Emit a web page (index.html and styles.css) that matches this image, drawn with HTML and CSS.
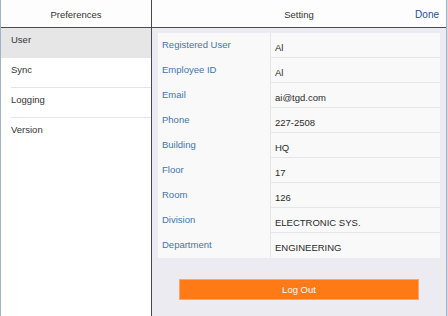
FILE: index.html
```html
<!DOCTYPE html>
<html lang="en">
<head>
    <meta charset="UTF-8">
    <meta name="viewport" content="width=device-width, initial-scale=1.0">
    <title>Preferences</title>
    <link rel="stylesheet" href="styles.css">
</head>
<body>
    <div class="app">
        <aside class="sidebar">
            <header class="bar">
                <span class="bar-title">Preferences</span>
            </header>
            <ul class="nav">
                <li class="nav-item selected"><span class="nav-label">User</span></li>
                <li class="nav-item"><span class="nav-label">Sync</span></li>
                <li class="nav-item"><span class="nav-label">Logging</span></li>
                <li class="nav-item last"><span class="nav-label">Version</span></li>
            </ul>
        </aside>

        <main class="detail">
            <header class="bar bar-split">
                <span></span>
                <span class="bar-title">Setting</span>
                <a class="done">Done</a>
            </header>
            <div class="content">
                <div class="card">
                    <div class="row"><div class="key">Registered User</div><div class="val">Al</div></div>
                    <div class="row"><div class="key">Employee ID</div><div class="val">Al</div></div>
                    <div class="row"><div class="key">Email</div><div class="val">ai@tgd.com</div></div>
                    <div class="row"><div class="key">Phone</div><div class="val">227-2508</div></div>
                    <div class="row"><div class="key">Building</div><div class="val">HQ</div></div>
                    <div class="row"><div class="key">Floor</div><div class="val">17</div></div>
                    <div class="row"><div class="key">Room</div><div class="val">126</div></div>
                    <div class="row"><div class="key">Division</div><div class="val">ELECTRONIC SYS.</div></div>
                    <div class="row"><div class="key">Department</div><div class="val">ENGINEERING</div></div>
                </div>
                <button class="logout">Log Out</button>
            </div>
        </main>
    </div>
</body>
</html>
```

FILE: styles.css
```css
body {
    margin: 0;
    background: #d3dce6;
    font-family: "Liberation Sans", Arial, sans-serif;
    font-size: 9.5px;
    color: #333;
}
.app {
    display: flex;
    width: 445px;
    height: 316px;
    border-left: 1px solid #9fb4c9;
    border-right: 1px solid #9fb4c9;
    background: #fff;
}
.sidebar {
    width: 150px;
    border-right: 1px solid #4a4a4a;
    background: #fff;
}
.bar {
    height: 28px;
    box-sizing: border-box;
    padding-top: 3px;
    line-height: 24px;
    text-align: center;
    border-bottom: 1px solid #4a4a4a;
    background: #fdfdfd;
    color: #333;
}
.bar-split {
    display: grid;
    grid-template-columns: 1fr auto 1fr;
}
.done {
    justify-self: end;
    padding-right: 7px;
    color: #1f4f8e;
    font-size: 10px;
}
.nav {
    list-style: none;
    margin: 0;
    padding: 0;
}
.nav-item {
    padding-left: 10px;
}
.nav-label {
    display: block;
    line-height: 24px;
    padding-bottom: 5px;
    border-bottom: 1px solid #e4e4e4;
}
.nav-item.selected {
    background: #e6e6e6;
}
.nav-item.selected .nav-label,
.nav-item.last .nav-label {
    border-bottom-color: transparent;
}
.detail {
    flex: 1;
    display: flex;
    flex-direction: column;
}
.content {
    flex: 1;
    background: #ecebf1;
    padding: 5px 6px 0;
    display: flex;
    flex-direction: column;
    align-items: center;
}
.card {
    align-self: stretch;
    background: #f9f9f9;
}
.row {
    display: grid;
    grid-template-columns: 112px 1fr;
    height: 25px;
    line-height: 12px;
}
.key {
    padding: 6px 0 0 4px;
    color: #3f76ae;
}
.val {
    padding: 9px 0 0 4px;
    border-left: 1px solid #e6e5ea;
    border-bottom: 1px solid #e6e5ea;
    color: #2a2a2a;
}
.row:last-child .val {
    border-bottom-color: #f9f9f9;
}
.logout {
    margin-top: 21px;
    width: 240px;
    height: 21px;
    background: #fd7a16;
    border: 1px solid #f7a76e;
    color: #fff;
    font-family: inherit;
    font-size: 9.5px;
    padding: 0;
}
```
